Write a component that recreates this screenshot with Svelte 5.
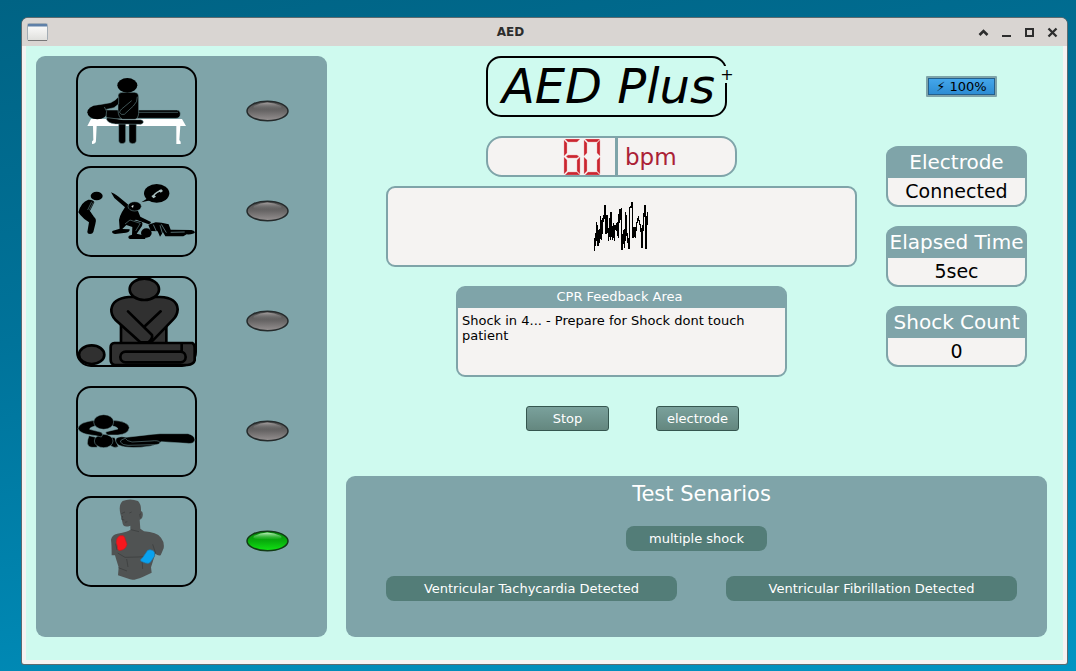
<script>
  const stats = [
    { label: 'Electrode', value: 'Connected' },
    { label: 'Elapsed Time', value: '5sec' },
    { label: 'Shock Count', value: '0' }
  ];
  const feedback = 'Shock in 4... - Prepare for Shock dont touch patient';
</script>

{#snippet lamp(on)}
  <svg class="lamp" viewBox="0 0 43 23" role="img" aria-label={on ? 'Active' : 'Inactive'}>
    <defs>
      <linearGradient id="lampOff" x1="0" y1="0" x2="0" y2="1">
        <stop offset="0" stop-color="#4d4d4d" /><stop offset="0.5" stop-color="#686666" /><stop offset="1" stop-color="#979292" />
      </linearGradient>
      <linearGradient id="lampOn" x1="0" y1="0" x2="0" y2="1">
        <stop offset="0" stop-color="#078a0b" /><stop offset="0.5" stop-color="#08ac0c" /><stop offset="1" stop-color="#12e414" />
      </linearGradient>
      <linearGradient id="shineOff" x1="0" y1="0" x2="0" y2="1">
        <stop offset="0" stop-color="#a5a0a0" /><stop offset="1" stop-color="#777" stop-opacity="0.1" />
      </linearGradient>
      <linearGradient id="shineOn" x1="0" y1="0" x2="0" y2="1">
        <stop offset="0" stop-color="#c5f3c5" /><stop offset="1" stop-color="#35bd38" stop-opacity="0.3" />
      </linearGradient>
    </defs>
    <ellipse cx="21.5" cy="11" rx="20.5" ry="9.8" fill={on ? 'url(#lampOn)' : 'url(#lampOff)'} stroke={on ? '#123b16' : '#252b2c'} stroke-width="1.500" />
    <path d="M8 6 Q21 -1 35 6 Q37 9 31 9 H12 Q6 9 8 6Z" fill={on ? 'url(#shineOn)' : 'url(#shineOff)'} />
  </svg>
{/snippet}

{#snippet frame()}
  <rect x="21" y="15" width="357" height="267" rx="42" fill="none" stroke="#000" stroke-width="6" />
{/snippet}

<div class="window">
  <header class="titlebar">
    <svg class="app-icon" viewBox="0 0 21 18" aria-hidden="true">
      <defs>
        <linearGradient id="sheet" x1="0" y1="0" x2="0" y2="1"><stop offset="0" stop-color="#fff" /><stop offset="1" stop-color="#dfdfdc" /></linearGradient>
      </defs>
      <rect x="0.5" y="0.5" width="20" height="17" rx="1" fill="url(#sheet)" stroke="#a3adb5" />
      <rect x="1" y="1" width="19" height="2.5" fill="#5f80a8" />
      <path d="M1 17.5H20" stroke="#777" />
    </svg>
    <h1>AED</h1>
    <div class="window-buttons">
      <button type="button" aria-label="Roll up"><svg viewBox="0 0 11 11"><path d="M1.500 8L5.500 4L9.500 8" fill="none" stroke="#2d2d2d" stroke-width="2.600" /></svg></button>
      <button type="button" aria-label="Minimise"><svg viewBox="0 0 11 11"><path d="M1 9H10" stroke="#2d2d2d" stroke-width="2" /></svg></button>
      <button type="button" aria-label="Maximise"><svg viewBox="0 0 11 11"><rect x="2" y="2" width="7" height="7" fill="none" stroke="#2d2d2d" stroke-width="2" /></svg></button>
      <button type="button" aria-label="Close"><svg viewBox="0 0 11 11"><path d="M1.500 1.500L9.500 9.500M9.500 1.500L1.500 9.500" stroke="#2d2d2d" stroke-width="2.300" /></svg></button>
    </div>
  </header>

  <main>
    <section class="steps" aria-label="Rescue steps">
      <div class="step">
        <svg class="picture" viewBox="18 12 363 273" role="img" aria-label="Check the patient">
          {@render frame()}
          <g transform="translate(0 -6)">
            <path d="M63 177H336L348 198H331L328 240Q334 244 332 252H319V198H80L78 240Q79 252 66 252Q64 243 70 240L69 198H52Z" fill="#fff" />
            <g stroke="#7ba2a7" stroke-width="1.500">
              <path d="M106 150H320Q331 151 331 161Q331 174 318 175H200L118 178Q105 176 106 150Z" />
              <path d="M203 157H324" />
              <path d="M146 190H167V243Q166 251 156 251Q147 251 146 243ZM177 190H199V243Q198 251 188 251Q178 251 177 243Z" />
              <path d="M144 108Q145 97 156 97H193Q206 98 206 111V160Q204 178 193 178H158Q145 174 144 150Z" />
              <path d="M146 110Q136 122 122 128L83 135Q74 143 80 151Q87 153 101 150L132 143L146 132Z" />
              <ellipse cx="82" cy="157" rx="30" ry="21" stroke="none" />
              <path d="M103 141Q114 152 108 169" fill="none" />
              <path d="M202 110Q203 126 190 138L163 163Q154 166 149 158Q148 153 155 147L185 122" />
              <path d="M112 173L159 179H211Q221 180 220 187Q218 194 208 193L137 192Q113 190 109 177Z" />
            </g>
            <ellipse cx="172" cy="76" rx="30" ry="22" />
          </g>
        </svg>
        {@render lamp(false)}
      </div>

      <div class="step">
        <svg class="picture" viewBox="18 12 363 273" role="img" aria-label="Call for help">
          {@render frame()}
          <ellipse cx="80" cy="102" rx="18" ry="13" />
          <path d="M55 113Q70 112 73 121L60 147L77 171Q79 176 76 186L70 210Q68 216 60 216Q52 216 52 210L57 181L43 171Q30 160 25 151Q33 120 55 113Z" />
          <path d="M70 121L59 143L74 166M65 119L53 144" fill="none" stroke="#7ba2a7" stroke-width="1.500" />
          <path d="M123 91L133 95L144 103L176 129Q191 140 204 147L211 164L243 180Q242 188 232 185L198 173L192 175L216 181Q219 184 216 192L200 215L229 222L225 231H180Q172 228 177 221L186 218L187 195L169 189L157 201L179 202Q180 211 168 212L135 216Q124 214 127 207L149 200L147 174Q150 160 156 150L165 136L133 108Z" />
          <path d="M165 186L180 174L211 184L197 207" fill="none" stroke="#7ba2a7" stroke-width="1.500" />
          <ellipse cx="194" cy="133" rx="20" ry="14" stroke="#7ba2a7" stroke-width="1.500" />
          <path d="M184 134Q186 128 191 130L189 137Z" fill="#d5dddd" />
          <ellipse cx="260" cy="94" rx="38" ry="28" />
          <path d="M234 108L214 121L242 115Z" />
          <path d="M248 104Q261 87 274 87" fill="none" stroke="#a9bfc0" stroke-width="4" />
          <path d="M244 102L252 98L258 104L250 109ZM266 85L274 82L279 87L272 92Z" fill="#a9bfc0" />
          <ellipse cx="229" cy="213" rx="16" ry="14" />
          <path d="M235 188L257 181L275 182L296 187L302 203L364 204Q373 205 375 211Q371 218 350 217L340 223H286L279 211L270 224L263 208L242 207Z" />
          <path d="M250 188L265 221M270 190L280 223M274 187L289 212M302 211L344 210" fill="none" stroke="#7ba2a7" stroke-width="2" />
        </svg>
        {@render lamp(false)}
      </div>

      <div class="step">
        <svg class="picture" viewBox="18 12 363 273" role="img" aria-label="Give chest compressions">
          {@render frame()}
          <g fill="#303030" stroke="#000" stroke-width="8" stroke-linejoin="round" stroke-linecap="round">
            <path d="M153 145H289V215H153Z" />
            <path d="M176 75H270Q321 77 323 112Q322 130 309 143L243 211H211L136 143Q123 129 124 112Q128 80 176 75Z" />
            <ellipse cx="223" cy="52" rx="44" ry="32" />
            <path d="M174 118L246 189Q249 200 236 210M272 118L226 161" fill="none" />
            <ellipse cx="65" cy="248" rx="38" ry="28" />
            <path d="M133 213H367Q375 217 374 233V265Q371 277 352 279H134Q122 276 122 263V226Q122 214 133 213ZM335 216V238" />
            <rect x="151" y="239" width="196" height="32" rx="16" />
          </g>
        </svg>
        {@render lamp(false)}
      </div>

      <div class="step">
        <svg class="picture" viewBox="18 12 363 273" role="img" aria-label="Stand clear">
          {@render frame()}
          <g stroke="#7ba2a7" stroke-width="1.500">
            <path d="M57 161Q52 174 52 184Q54 196 66 196H82L77 166ZM124 166L122 191Q132 200 145 194L134 167Z" />
            <path d="M169 166Q231 158 270 155H354Q373 159 375 174Q371 187 351 184L274 179Q265 185 243 192Q177 202 147 190Q133 181 139 169Q149 161 169 166Z" />
            <ellipse cx="101" cy="177" rx="28" ry="20" />
            <path d="M76 115Q27 120 24 139Q27 157 78 161L94 165Q102 158 94 151L59 142Q58 136 75 132ZM126 115Q174 117 178 137Q175 156 144 159H113Q103 152 110 149L144 141Q143 135 128 132Z" />
            <ellipse cx="101" cy="120" rx="30" ry="22" />
            <path d="M166 169Q150 173 151 180Q158 190 174 190L253 188Q270 188 270 181Q265 174 243 177L186 180Q169 177 166 169Z" />
          </g>
        </svg>
        {@render lamp(false)}
      </div>

      <div class="step">
        <svg class="picture" viewBox="18 12 363 273" role="img" aria-label="Attach electrode pads">
          {@render frame()}
          <path d="M151 65Q145 38 158 27Q180 18 204 27Q214 37 213 57Q220 59 218 72Q216 82 209 83L211 110L222 118Q260 120 273 137Q284 151 281 169L272 190Q263 192 256 185L249 207L243 226L245 242L218 255Q190 267 180 262L144 250L146 226L138 200L135 190H125Q125 158 123 143Q126 128 142 125Q175 119 181 113V101Q159 110 157 90Z" fill="#505353" />
          <path d="M165 91L172 89M154 65L165 60M178 63L185 60M158 72L155 82L163 84M213 67Q207 60 211 77M183 113L207 119M137 155L141 174M143 183L165 196L203 195L224 194M170 201L174 225M216 200L218 231M145 227L171 237M248 157L257 184" fill="none" stroke="#303333" stroke-width="1.500" />
          <path d="M149 131H160Q165 135 166 143L171 157Q168 170 159 173L147 176Q141 172 142 162L139 152Q138 138 149 131Z" fill="#f7171d" stroke="#bc1e23" stroke-width="2" />
          <path d="M233 175Q239 171 250 176Q256 181 254 192L241 211Q237 216 226 213L213 208Q209 202 217 198Z" fill="#09a2ef" stroke="#2175a6" stroke-width="2" />
        </svg>
        {@render lamp(true)}
      </div>
    </section>

    <div class="console">
      <div class="readouts">
        <div class="center">
          <div class="logo">AED Plus<span class="plus">+</span></div>

          <div class="rate">
            <svg class="digits" viewBox="0 0 40 36" role="img" aria-label="60">
              <g fill="#ca2630" stroke="#eda4a8" stroke-width="0.400">
                <path d="M2 0H17L14 3H5ZM1 1L4 4V14L1 17ZM3 17.500L5 16H14L16 17.500L14 19H5ZM1 18L4 21V32L1 35ZM14 21L17 18V35L14 32ZM2 36L5 33H14L17 36Z" />
                <path d="M22 0H37L34 3H25ZM21 1L24 4V14L21 17ZM34 4L37 1V17L34 14ZM21 18L24 21V32L21 35ZM34 21L37 18V35L34 32ZM22 36L25 33H34L37 36Z" />
              </g>
            </svg>
            <span class="unit">bpm</span>
          </div>

          <div class="ecg">
            <svg viewBox="99 45 168 156" role="img" aria-label="ECG trace" shape-rendering="crispEdges">
              <polyline fill="none" stroke="#000" stroke-width="4" points="103,197 104,158 107,182 110,110 114,182 117,135 119,175 122,92 125,165 127,100 131,110 135,60 138,146 141,90 146,168 149,98 152,165 153,80 157,165 160,115 163,168 165,120 169,138 172,110 175,160 178,75 183,72 185,193 188,193 190,135 194,188 197,80 200,140 207,193 209,70 213,65 216,50 219,158 222,125 226,158 229,120 235,98 243,130 246,190 250,110 255,60 258,192 262,82" />
            </svg>
          </div>

          <section class="feedback">
            <h2>CPR Feedback Area</h2>
            <p>{feedback}</p>
          </section>

          <div class="actions">
            <button type="button">Stop</button>
            <button type="button">electrode</button>
          </div>
        </div>

        <aside>
          <div class="battery">⚡ 100%</div>
          {#each stats as stat}
            <section class="stat">
              <h2>{stat.label}</h2>
              <p>{stat.value}</p>
            </section>
          {/each}
        </aside>
      </div>

      <section class="scenarios">
        <h2>Test Senarios</h2>
        <button type="button" class="single">multiple shock</button>
        <div class="pair">
          <button type="button">Ventricular Tachycardia Detected</button>
          <button type="button">Ventricular Fibrillation Detected</button>
        </div>
      </section>
    </div>
  </main>
</div>

<style>
  :global(body) {
    background: linear-gradient(170deg, #006384 0%, #00739a 40%, #0095c3 100%) no-repeat #0095c3;
    font: 13px/15px "DejaVu Sans", sans-serif;
    color: #000;
  }
  :global(#app) { display: flow-root; }
  * { box-sizing: border-box; }
  h1, h2, p { margin: 0; font-weight: normal; }
  button { font: inherit; color: #fff; padding: 0; border: 0; }

  .window {
    margin: 18px 9px 7px 22px;
    background: #f5f3f2;
    border-radius: 6px 6px 2px 2px;
    box-shadow: 0 0 0 1px #5d6b70;
    padding: 0 4px 4px;
    min-width: 960px;
  }
  .titlebar {
    display: grid;
    grid-template-columns: 1fr auto 1fr;
    align-items: center;
    height: 28px;
    margin: 0 -4px;
    padding: 0 9px 0 5px;
    background: #d9d5d2;
    border-radius: 6px 6px 0 0;
  }
  .app-icon { width: 21px; height: 18px; }
  h1 { font-size: 12px; font-weight: bold; color: #2d2d2d; padding-right: 64px; }
  .window-buttons { display: flex; gap: 12px; justify-content: flex-end; }
  .window-buttons button { background: none; height: 11px; }
  .window-buttons svg { display: block; width: 11px; height: 11px; }

  main {
    display: flex;
    gap: 19px;
    padding: 10px 16px 23px 10px;
    background: #cffaef;
  }
  .steps {
    flex: 0 0 291px;
    display: flex;
    flex-direction: column;
    gap: 19px;
    padding: 10px 38px 50px 40px;
    background: #7fa4a9;
    border-radius: 9px;
  }
  .step { display: flex; align-items: center; justify-content: space-between; }
  .step:first-child { margin-bottom: -10px; }
  .picture { width: 121px; height: 91px; }
  .lamp { width: 43px; height: 23px; }

  .console { flex: 1; display: flex; flex-direction: column; gap: 45px; }
  .readouts { display: flex; gap: 29px; padding: 0 20px 0 40px; }
  .center { flex: 1; display: flex; flex-direction: column; align-items: center; }
  .logo {
    position: relative;
    width: 241px;
    height: 61px;
    margin: 0 30px 19px 0;
    padding-left: 4px;
    border: 2px solid #000;
    border-radius: 15px;
    font-size: 48px;
    line-height: 57px;
    font-style: italic;
    text-align: center;
    white-space: nowrap;
  }
  .plus {
    position: absolute;
    top: 8px;
    right: -9px;
    width: 14px;
    background: #cffaef;
    font-size: 16px;
    line-height: 17px;
  }
  .rate {
    display: flex;
    width: 251px;
    height: 41px;
    margin: 0 20px 9px 0;
    border: 2px solid #7fa4a9;
    border-radius: 16px;
    background: #f5f3f2;
    color: #ab2136;
  }
  .digits { width: 40px; height: 36px; margin: 1px 12px 0 75px; }
  .unit { flex: 1; padding-left: 7px; border-left: 3px solid #7fa4a9; font-size: 23px; line-height: 39px; }
  .ecg {
    align-self: stretch;
    display: flex;
    align-items: center;
    justify-content: center;
    height: 81px;
    padding: 0 2px 2px 0;
    border: 2px solid #7fa4a9;
    border-radius: 9px;
    background: #f5f3f2;
  }
  .ecg svg { width: 56px; height: 52px; }
  .feedback {
    width: 331px;
    height: 91px;
    margin: 19px 0 29px;
    border: 2px solid #7fa4a9;
    border-radius: 9px;
    background: #f5f3f2;
  }
  .feedback h2 { background: #7fa4a9; color: #fff; font-size: 13px; line-height: 17px; padding: 0 4px 3px 0; text-align: center; border-radius: 5px 5px 0 0; }
  .feedback p { padding: 5px 4px; }
  .actions { display: flex; gap: 47px; padding-left: 22px; }
  .actions button {
    width: 83px;
    height: 25px;
    border: 1px solid #35564f;
    border-radius: 3px;
    background: linear-gradient(#7aa19c, #64877f);
  }

  aside { flex: 0 0 141px; display: flex; flex-direction: column; gap: 19px; padding-top: 20px; }
  .battery {
    align-self: center;
    width: 71px;
    height: 21px;
    margin: 0 0 30px 10px;
    border: 2px solid #7fa4a9;
    border-radius: 1px;
    background: linear-gradient(#45a8ec, #2c8bd2);
    box-shadow: inset 0 0 0 1px #245f8c;
    line-height: 17px;
    text-align: center;
  }
  .stat {
    border: 2px solid #7fa4a9;
    border-radius: 12px;
    background: #f5f3f2;
    font-size: 19px;
    text-align: center;
    white-space: nowrap;
  }
  .stat h2 { background: #7fa4a9; color: #fff; font-size: 20px; line-height: 28px; padding-bottom: 2px; margin: 0 -2px; border-radius: 8px 8px 0 0; }
  .stat p { line-height: 27px; }

  .scenarios {
    display: flex;
    flex-direction: column;
    align-items: center;
    padding: 5px 30px 36px 40px;
    background: #7fa4a9;
    border-radius: 9px;
  }
  .scenarios h2 { font-size: 21px; line-height: 27px; color: #fff; }
  .scenarios button { height: 25px; border-radius: 8px; background: #537d78; }
  .scenarios .single { width: 141px; margin: 18px 10px 25px 0; }
  .pair { align-self: stretch; display: flex; gap: 49px; }
  .pair button { flex: 1; }
</style>
